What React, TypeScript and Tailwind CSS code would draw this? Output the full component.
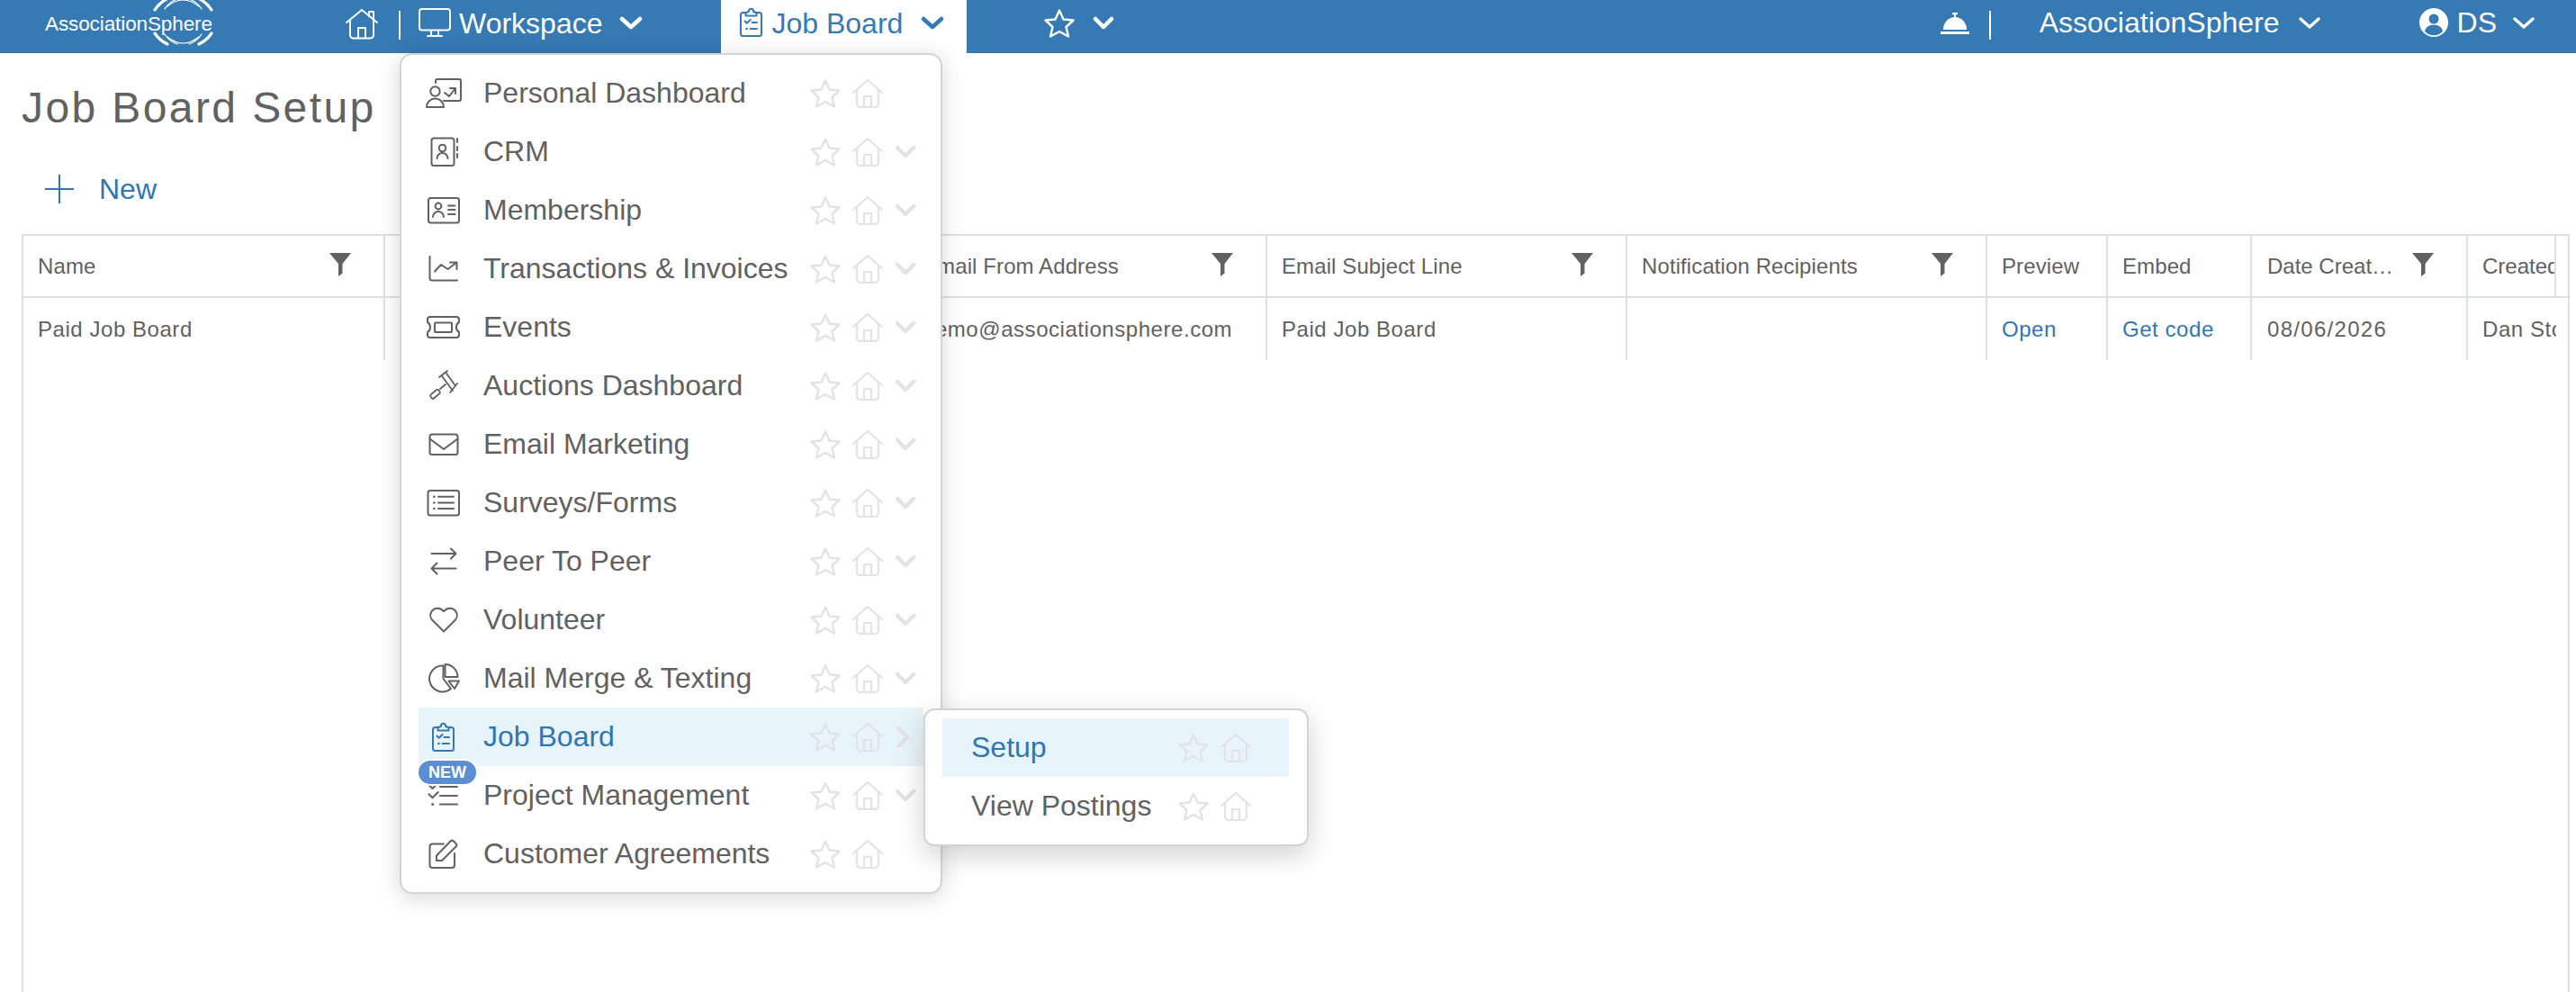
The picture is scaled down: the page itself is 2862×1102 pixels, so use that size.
import React from "react";

const S = ({ w = 44, h = 44, children, className = "" }: { w?: number; h?: number; children: React.ReactNode; className?: string }) => (
  <svg width={w} height={h} viewBox={`0 0 ${w} ${h}`} fill="none" stroke="currentColor" strokeWidth={2} strokeLinecap="round" strokeLinejoin="round" className={`shrink-0 ${className}`}>
    {children}
  </svg>
);

const Star = ({ className = "" }: { className?: string }) => (
  <S w={34} h={32} className={className}>
    <polygon points="17,1.5 21.5,11.5 32.5,12.5 24.5,20 27,30.5 17,25 7,30.5 9.5,20 1.5,12.5 12.5,11.5" strokeWidth={2.4} />
  </S>
);
const GreyHome = () => (
  <S w={34} h={32}>
    <g strokeWidth={2.2}>
      <path d="M1 15 L17 1 L33 15" />
      <path d="M5 12 V27 a4 4 0 0 0 4 4 H25 a4 4 0 0 0 4-4 V12" />
      <path d="M13 31 V19 H21 V31" />
    </g>
  </S>
);
const Chev = ({ w = 24, sw = 4.5 }: { w?: number; sw?: number }) => (
  <S w={w} h={15}>
    <path d={`M3 3 L${w / 2} 12 L${w - 3} 3`} strokeWidth={sw} />
  </S>
);
const ChevRight = () => (
  <S w={24} h={24}>
    <path d="M4 2 L14 12 L4 22" strokeWidth={4.5} />
  </S>
);
const Funnel = ({ className = "" }: { className?: string }) => (
  <svg width={24} height={26} viewBox="0 0 24 26" className={`shrink-0 text-[#616161] ${className}`}>
    <path d="M0 0 H24 L14.5 12 V22.5 L10 26 V12 Z" fill="currentColor" />
  </svg>
);

const I = {
  personal: (
    <>
      <path d="M13 10 V8 a2 2 0 0 1 2-2 h24 a2 2 0 0 1 2 2 v20 a2 2 0 0 1-2 2 H22" />
      <circle cx={12.5} cy={19.5} r={5.2} />
      <path d="M3 37 a9.5 9.5 0 0 1 19 0 z" />
      <path d="M23 21 l5 4 l7-9 M29 16 h6 v6" />
    </>
  ),
  crm: (
    <>
      <rect x={8.5} y={6.5} width={25} height={30.5} rx={2.5} />
      <circle cx={20.5} cy={17.5} r={3.8} />
      <path d="M14.5 29 a6 6 0 0 1 12 0" />
      <path d="M37 7 V11 M37 16 V20 M37 24 V28 " />
    </>
  ),
  member: (
    <>
      <rect x={5} y={8} width={34} height={27.5} rx={2.5} />
      <circle cx={16} cy={17} r={3.4} />
      <path d="M10 29 a6 6 0 0 1 12 0" />
      <path d="M27 16.5 H34.5 M27 21 H34.5 M27 26 H34.5" />
    </>
  ),
  trans: (
    <>
      <path d="M6.5 8 V32 a2.5 2.5 0 0 0 2.5 2.5 H37" />
      <path d="M12 24.5 L19 17 L26.5 22 L36.5 14.5 M29 14.5 H36.5 V22" />
    </>
  ),
  events: (
    <>
      <path d="M7 10 H36 a3 3 0 0 1 3 3 v3 q-3 1.5 -3 5.5 t3 5.5 v3 a3 3 0 0 1-3 3 H7 a3 3 0 0 1-3-3 v-3 q3 -1.5 3 -5.5 t-3 -5.5 v-3 a3 3 0 0 1 3-3 Z" />
      <rect x={12} y={16.5} width={19} height={10.5} rx={1} />
    </>
  ),
  auction: (
    <g strokeWidth={1.8}>
      <path d="M17 12 L26 5 M29 29 L37 19 M19.5 10 L32 27 M24 6.5 L35 21.5" />
      <path d="M24 20 L18 25" />
      <path d="M7.5 31.5 L14 26 a1.5 1.5 0 0 1 2 .2 L17.5 28 a1.5 1.5 0 0 1 0 2 L11 35.5 a1.5 1.5 0 0 1-2 0 L7.5 33.5 a1.5 1.5 0 0 1 0-2 Z" />
    </g>
  ),
  email: (
    <>
      <rect x={6.5} y={10.5} width={31} height={22.5} rx={2.5} />
      <path d="M6.5 15.5 L22 27 L37.5 15.5" />
    </>
  ),
  survey: (
    <>
      <rect x={4.5} y={8} width={34.5} height={27.5} rx={2.5} />
      <path d="M16 14.7 H33 M16 21.5 H33 M16 28 H33" />
      <path d="M11.3 14.7 h.01 M11.3 21.5 h.01 M11.3 28 h.01" strokeWidth={2.6} />
    </>
  ),
  peer: (
    <path d="M8.5 13 H35.5 M30 7.5 L35.5 13 L30 18.5 M35.5 29.5 H8.5 M14.5 23.5 L8.5 29.5 L14.5 35.5" />
  ),
  heart: (
    <path d="M22 34.5 L9 21.5 a8 8 0 0 1 0-10 a8.2 8.2 0 0 1 13 0.8 a8.2 8.2 0 0 1 13-0.8 a8 8 0 0 1 0 10 Z" />
  ),
  pie: (
    <>
      <path d="M21.5 7.5 A14.5 14.5 0 1 0 30 33 L21.5 22 Z" />
      <path d="M23.5 6 A14 14 0 0 1 37.5 20 H23.5 Z" />
      <path d="M27.5 24.5 H39 L34 33 Z" />
    </>
  ),
  job: (
    <>
      <path d="M16.5 11 H12.5 a2.5 2.5 0 0 0-2.5 2.5 V34.5 a2.5 2.5 0 0 0 2.5 2.5 H30.5 a2.5 2.5 0 0 0 2.5-2.5 V13.5 a2.5 2.5 0 0 0-2.5-2.5 H26.5" />
      <path d="M15.5 14.5 V11 L19 10 V8.5 a2.7 2.7 0 0 1 5 0 V10 L27.5 11 V14.5 Z" />
      <path d="M14.5 20.5 L16.7 22.8 L20.7 19 M22.5 22 H28 M20.7 29 H28" />
      <path d="M16.5 29 h.01" strokeWidth={2.6} />
    </>
  ),
  project: (
    <>
      <path d="M5.5 10 L9.5 14 L15.5 8 M5.5 20.3 L9.5 24.3 L15.7 18 M18 12 H37 M18 22 H37 M18 31.5 H37" />
      <path d="M9.7 31.5 h.01" strokeWidth={3} />
    </>
  ),
  agree: (
    <>
      <path d="M22 10.5 H9.5 a3 3 0 0 0-3 3 V34 a3 3 0 0 0 3 3 H31 a3 3 0 0 0 3-3 V21" />
      <path d="M14 29 V23.5 L29.5 7.5 a2.5 2.5 0 0 1 3.5 0 L35.5 10 a2.5 2.5 0 0 1 0 3.5 L20 29 Z" />
    </>
  ),
};

const items: { label: string; icon: React.ReactNode; chev?: boolean; active?: boolean; badge?: boolean }[] = [
  { label: "Personal Dashboard", icon: I.personal },
  { label: "CRM", icon: I.crm, chev: true },
  { label: "Membership", icon: I.member, chev: true },
  { label: "Transactions & Invoices", icon: I.trans, chev: true },
  { label: "Events", icon: I.events, chev: true },
  { label: "Auctions Dashboard", icon: I.auction, chev: true },
  { label: "Email Marketing", icon: I.email, chev: true },
  { label: "Surveys/Forms", icon: I.survey, chev: true },
  { label: "Peer To Peer", icon: I.peer, chev: true },
  { label: "Volunteer", icon: I.heart, chev: true },
  { label: "Mail Merge & Texting", icon: I.pie, chev: true },
  { label: "Job Board", icon: I.job, active: true },
  { label: "Project Management", icon: I.project, chev: true, badge: true },
  { label: "Customer Agreements", icon: I.agree },
];

const Header = ({ label, filter }: { label?: string; filter?: boolean }) => (
  <div className={`flex items-center overflow-hidden border-r-2 border-[#dfe0e6] pl-[16px] ${filter ? "pr-[36px]" : ""}`}>
    {label && <span className="flex-1 whitespace-nowrap tracking-[0.1px]">{label}</span>}
    {filter && <Funnel className="-mt-[3px]" />}
  </div>
);

const Cell = ({ children, link, last, date }: { children?: React.ReactNode; link?: boolean; last?: boolean; date?: boolean }) => (
  <div className={`flex items-center overflow-hidden whitespace-nowrap ${date ? "pl-[17px] tracking-[1.3px]" : "pl-[16px] tracking-[0.55px]"} ${last ? "" : "border-r-2 border-[#dfe0e6]"} ${link ? "text-[#2f76b5]" : ""}`}>
    {children}
  </div>
);

export default function App() {
  return (
    <div className="relative flex h-[1102px] w-[2862px] flex-col overflow-hidden bg-white font-['Liberation_Sans',Arial,sans-serif] text-[#616161]">
      {/* Top bar */}
      <nav className="flex h-[59px] shrink-0 items-center bg-[#3579b5] text-[32px] text-white">
        <div className="relative ml-[50px] w-[187px] shrink-0">
          <span className="mb-[6px] block whitespace-nowrap text-[22.5px] tracking-[-0.1px]">AssociationSphere</span>
          <svg width={80} height={56} viewBox="0 0 80 56" fill="none" stroke="currentColor" strokeLinecap="round" className="absolute left-[113px] top-[-13px]">
            <g strokeWidth={3.2}>
              <path d="M9 14 A34 34 0 0 1 22 2" />
              <path d="M59 2 A34 34 0 0 1 72 14" />
              <path d="M9 40 A34 34 0 0 0 23 52" />
              <path d="M72 40 A34 34 0 0 1 58 52" />
            </g>
            <g strokeWidth={1.2}>
              <path d="M20 13 Q25 5 34 2" />
              <path d="M61 13 Q56 5 47 2" />
              <path d="M20 41 Q25 49 34 52" />
              <path d="M61 41 Q56 49 47 52" />
              <path d="M23 10 Q40 -4 58 10" />
              <path d="M23 44 Q40 58 58 44" />
            </g>
          </svg>
        </div>
        <S w={36} h={34} className="-mt-[6px] ml-[147px]">
          <path d="M1 15 L18 1 L35 15" />
          <path d="M26 8 V3 H31 V11" />
          <path d="M5 13 V29 a3.5 3.5 0 0 0 3.5 3.5 H27.5 a3.5 3.5 0 0 0 3.5-3.5 V13" />
          <path d="M14 32.5 V21 H22 V32.5" />
        </S>
        <div className="-mt-[4px] ml-[23px] h-[32px] w-[2px] bg-white" />
        <S w={36} h={33} className="-mt-[8px] ml-[20px]">
          <rect x={1} y={1} width={34} height={23.5} rx={3} />
          <path d="M14 25 V30.5 M22 25 V30.5 M10 31 H26" />
        </S>
        <span className="mb-[8px] ml-[9px]">Workspace</span>
        <div className="-mt-[8px] ml-[19px]"><Chev w={26} /></div>
        <div className="ml-[87px] flex h-full w-[273px] items-center bg-white pl-[12px] text-[#3579b5]">
          <S className="-mt-[10px]">{I.job}</S>
          <span className="mb-[8px]">Job Board</span>
          <div className="-mt-[8px] ml-[20px]"><Chev w={26} /></div>
        </div>
        <Star className="-mt-[8px] ml-[86px]" />
        <div className="-mt-[8px] ml-[20px]"><Chev /></div>

        <svg width={32} height={24} viewBox="0 0 32 24" fill="currentColor" className="-mt-[7px] ml-auto shrink-0">
          <rect x={13} y={0} width={6} height={2.2} />
          <rect x={15} y={2} width={2} height={3} />
          <path d="M3 19 a13 14 0 0 1 26 0 z" />
          <rect x={0} y={21} width={32} height={3} />
        </svg>
        <div className="-mt-[3px] ml-[22px] h-[32px] w-[2px] bg-white" />
        <span className="mb-[10px] ml-[54px]">AssociationSphere</span>
        <div className="-mt-[8px] ml-[20px]"><Chev w={26} sw={3.4} /></div>
        <svg width={32} height={32} viewBox="0 0 32 32" className="-mt-[9px] ml-[109px] shrink-0">
          <circle cx={16} cy={16} r={16} fill="#fff" />
          <circle cx={16} cy={12} r={5.5} fill="#3579b5" />
          <path d="M6 26 a10 7.5 0 0 1 20 0 a14 14 0 0 1-20 0 z" fill="#3579b5" />
        </svg>
        <span className="mb-[10px] ml-[10px]">DS</span>
        <div className="-mt-[8px] ml-[17px] mr-[45px]"><Chev w={26} sw={3.4} /></div>
      </nav>

      {/* Page */}
      <h1 className="ml-[24px] mt-[33px] h-[56px] text-[48px] leading-[56px] tracking-[2.4px]">Job Board Setup</h1>
      <div className="ml-[50px] mt-[42px] flex h-[40px] items-center text-[32px] text-[#2f76b5]">
        <svg width={32} height={32} viewBox="0 0 32 32" stroke="currentColor" strokeWidth={2} className="shrink-0">
          <path d="M16 0 V32 M0 16 H32" />
        </svg>
        <span className="ml-[28px]">New</span>
      </div>

      {/* Table */}
      <div className="ml-[24px] mt-[30px] w-[2831px] flex-1 border-x-2 border-t-2 border-[#dfe0e6] text-[24px]">
        <div className="grid h-[69px] grid-cols-[402px_581px_399px_400px_400px_134px_160px_240px_98px] border-b-2 border-[#dfe0e6]">
          <Header label="Name" filter />
          <Header />
          <Header label="Email From Address" filter />
          <Header label="Email Subject Line" filter />
          <Header label="Notification Recipients" filter />
          <Header label="Preview" />
          <Header label="Embed" />
          <div className="flex items-center border-r-2 border-[#dfe0e6] pl-[17px]">
            <span className="w-[136px] whitespace-nowrap">Date Creat…</span>
            <Funnel className="-mt-[3px] ml-[25px]" />
          </div>
          <div className="flex items-center overflow-hidden whitespace-nowrap border-r-2 border-[#dfe0e6] pl-[16px]">Created By</div>
        </div>
        <div className="grid h-[69px] grid-cols-[402px_581px_399px_400px_400px_134px_160px_240px_98px]">
          <Cell>Paid Job Board</Cell>
          <Cell />
          <Cell>demo@associationsphere.com</Cell>
          <Cell>Paid Job Board</Cell>
          <Cell />
          <Cell link>Open</Cell>
          <Cell link>Get code</Cell>
          <Cell date>08/06/2026</Cell>
          <Cell last>Dan Stone</Cell>
        </div>
      </div>

      {/* Workspace menu */}
      <div className="absolute left-[444px] top-[59px] z-10 w-[603px] rounded-[14px] border-2 border-[#d4d4d4] bg-white px-[19px] py-[10px] text-[32px] shadow-[0_4px_24px_rgba(0,0,0,0.16)]">
        {items.map((it) => (
          <div key={it.label} className={`relative flex h-[65px] items-center ${it.active ? "bg-[#e8f4fb] text-[#2f76b5]" : ""}`}>
            {it.badge && (
              <span className="absolute left-0 top-[-6px] z-10 flex h-[26px] w-[64px] items-center justify-center rounded-full bg-[#5b8fd2] text-[18px] font-bold leading-none text-white ring-2 ring-white">NEW</span>
            )}
            <S className={`ml-[6px] ${it.active ? "text-[#3579b5]" : "text-[#616161]"}`}>{it.icon}</S>
            <span className="mb-[2px] ml-[22px] flex-1 whitespace-nowrap">{it.label}</span>
            <div className="flex items-center text-[#e3e3e3]">
              <Star />
              <div className="ml-[13px]"><GreyHome /></div>
              <div className="ml-[13px] mr-[8px] flex w-[24px] items-center">
                {it.chev && <Chev />}
                {it.active && <ChevRight />}
              </div>
            </div>
          </div>
        ))}
      </div>

      {/* Job Board submenu */}
      <div className="absolute left-[1026px] top-[787px] z-20 w-[428px] rounded-[12px] border-2 border-[#d4d4d4] bg-white pb-[10px] pl-[19px] pr-[20px] pt-[9px] text-[32px] shadow-[0_10px_30px_rgba(0,0,0,0.18)]">
        <div className="flex h-[65px] items-center bg-[#e8f4fb] pl-[32px] text-[#2f76b5]">
          <span className="mb-[2px] flex-1">Setup</span>
          <div className="mr-[42px] flex items-center gap-[13px] text-[#e3e3e3]"><Star /><GreyHome /></div>
        </div>
        <div className="flex h-[65px] items-center pl-[32px]">
          <span className="mb-[2px] flex-1">View Postings</span>
          <div className="mr-[42px] flex items-center gap-[13px] text-[#e3e3e3]"><Star /><GreyHome /></div>
        </div>
      </div>
    </div>
  );
}
